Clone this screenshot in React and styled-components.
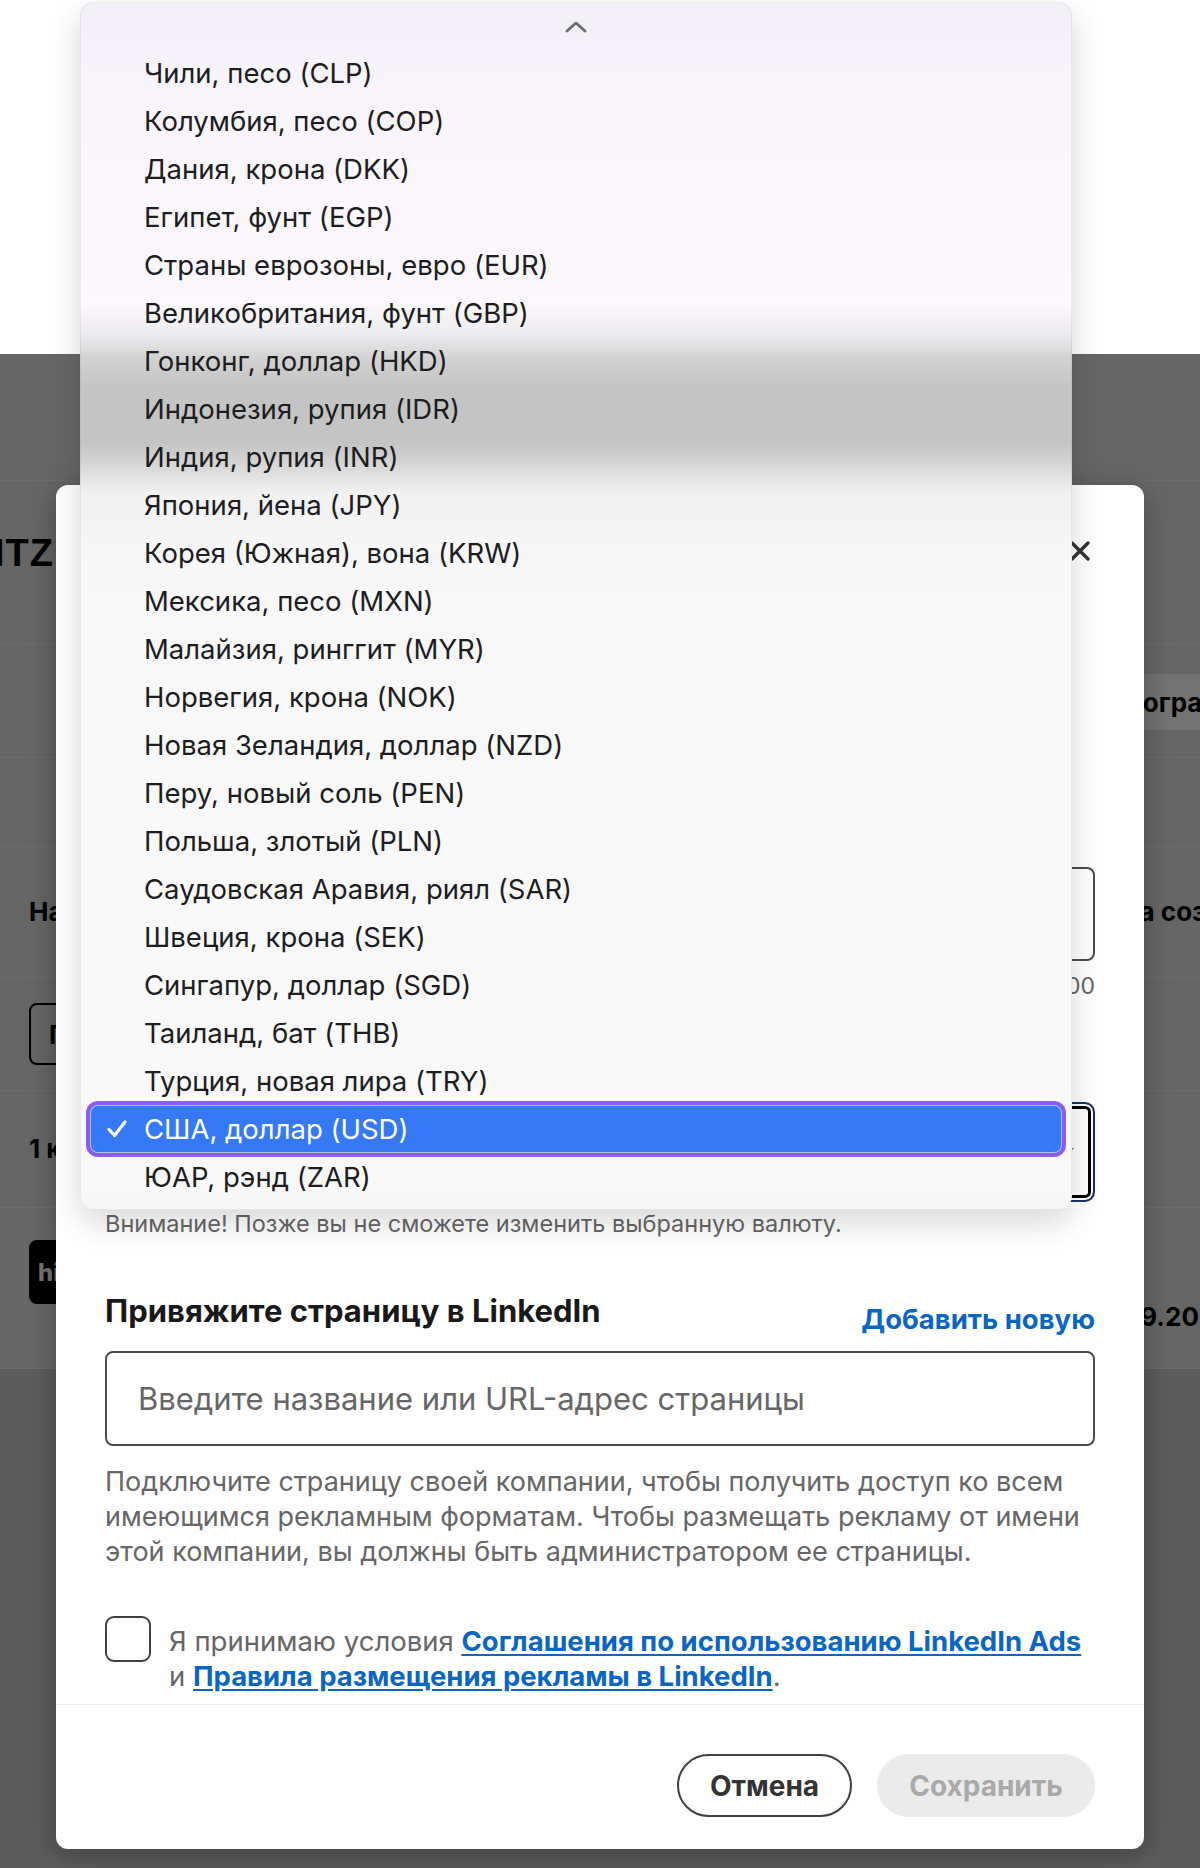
import React from "react";
import styled, { createGlobalStyle } from "styled-components";

const GlobalStyle = createGlobalStyle`
  html, body { margin: 0; padding: 0; background: #ffffff; }
  body { font-family: Inter, "Noto Sans", "Liberation Sans", sans-serif; -webkit-font-smoothing: antialiased; }
  * { box-sizing: border-box; }
`;

const currencies = [
  "Чили, песо (CLP)",
  "Колумбия, песо (COP)",
  "Дания, крона (DKK)",
  "Египет, фунт (EGP)",
  "Страны еврозоны, евро (EUR)",
  "Великобритания, фунт (GBP)",
  "Гонконг, доллар (HKD)",
  "Индонезия, рупия (IDR)",
  "Индия, рупия (INR)",
  "Япония, йена (JPY)",
  "Корея (Южная), вона (KRW)",
  "Мексика, песо (MXN)",
  "Малайзия, ринггит (MYR)",
  "Норвегия, крона (NOK)",
  "Новая Зеландия, доллар (NZD)",
  "Перу, новый соль (PEN)",
  "Польша, злотый (PLN)",
  "Саудовская Аравия, риял (SAR)",
  "Швеция, крона (SEK)",
  "Сингапур, доллар (SGD)",
  "Таиланд, бат (THB)",
  "Турция, новая лира (TRY)",
  "США, доллар (USD)",
  "ЮАР, рэнд (ZAR)",
];
const SELECTED = "США, доллар (USD)";

/* ---------- screen ---------- */
const Screen = styled.div`
  position: relative;
  width: 1200px;
  height: 1868px;
  overflow: hidden;
  background: #ffffff;
`;

const TopBand = styled.div`
  height: 354px;
  background: #ffffff;
`;

/* ---------- page behind the dialog ---------- */
const PageArea = styled.div`
  position: relative;
  height: 1514px;
  background: #cdcdcd;
`;

const PageContent = styled.div`
  background: #e3e3e3;
  padding-top: 126px;
`;

const PageRow = styled.div`
  display: flex;
  align-items: ${(p) => p.$align || "center"};
  height: ${(p) => p.$h}px;
  padding-left: 29px;
  padding-top: ${(p) => p.$pt || 0}px;
  border-top: 1px solid #f0f0f0;
  white-space: nowrap;
`;

const LeftCell = styled.div`
  flex: 0 0 ${(p) => p.$w}px;
  display: flex;
`;

const RightCell = styled.div`
  flex: none;
  display: flex;
`;

const TitleClip = styled.div`
  width: 54px;
  margin-left: -29px;
  overflow: hidden;
  display: flex;
  justify-content: flex-end;
  font-family: "Liberation Sans", Arial, sans-serif;
  font-weight: 700;
  font-size: 38px;
  line-height: 44px;
  color: #000;
  letter-spacing: 1px;
`;

const RowText = styled.div`
  font-weight: 700;
  font-size: 26px;
  line-height: 34px;
  color: #000;
  margin-top: ${(p) => p.$mt || 0}px;
`;

const GhostButton = styled.div`
  display: inline-flex;
  align-items: center;
  height: ${(p) => p.$h}px;
  padding: 0 18px;
  border-radius: 8px;
  font-weight: 700;
  font-size: 26px;
  color: #000;
  background: ${(p) => (p.$filled ? "#ffffff" : "transparent")};
  border: ${(p) => (p.$filled ? "none" : "2px solid #000")};
`;

const LogoTile = styled.div`
  width: 64px;
  height: 64px;
  border-radius: 8px;
  background: #000;
  color: #fff;
  font-weight: 800;
  font-size: 24px;
  display: flex;
  align-items: center;
  padding-left: 9px;
`;

const Dim = styled.div`
  position: absolute;
  inset: 0;
  background: rgba(0, 0, 0, 0.55);
`;

/* ---------- modal ---------- */
const Modal = styled.div`
  position: absolute;
  left: 56px;
  top: 485px;
  width: 1088px;
  background: #ffffff;
  border-radius: 12px;
  box-shadow: 0 6px 28px rgba(0, 0, 0, 0.3);
  display: flex;
  flex-direction: column;
`;

const ModalBody = styled.div`
  padding: 0 49px;
  display: flex;
  flex-direction: column;
`;

const Header = styled.div`
  height: 132px;
  display: flex;
  align-items: center;
  justify-content: space-between;
`;

const Title = styled.h2`
  margin: 0;
  font-size: 30px;
  font-weight: 700;
  color: #191919;
`;

const CloseButton = styled.button`
  width: 30px;
  height: 30px;
  padding: 0;
  border: none;
  background: none;
  display: flex;
  align-items: center;
  justify-content: center;
`;

const FieldLabel = styled.label`
  display: block;
  font-size: 24px;
  line-height: ${(p) => p.$lh}px;
  margin-top: ${(p) => p.$mt}px;
  margin-bottom: ${(p) => p.$mb}px;
  color: #404040;
`;

const TextBox = styled.div`
  height: ${(p) => p.$h}px;
  border: 2px solid #4a4a4a;
  border-radius: 8px;
  display: flex;
  align-items: center;
  padding-left: 31px;
  font-size: 31px;
  color: #666666;
`;

const Counter = styled.div`
  margin-top: 10px;
  text-align: right;
  font-size: 23px;
  line-height: 30px;
  color: #666;
`;

const SelectBox = styled.div`
  position: relative;
  height: 100px;
  border-radius: 10px;
  border: 2px solid #16355f;
  box-shadow: inset 0 0 0 2px #ffffff, inset 0 0 0 5px #000000;
  display: flex;
  align-items: center;
  padding-left: 31px;
  font-size: 30px;
  color: #191919;
`;

const SelectCaret = styled.svg`
  position: absolute;
  right: 18px;
  top: 42px;
`;

const Note = styled.p`
  margin: 7px 0 0;
  font-size: 23.5px;
  line-height: 30px;
  color: #666666;
`;

const SectionRow = styled.div`
  margin-top: 54px;
  display: flex;
  justify-content: space-between;
  align-items: flex-start;
  height: 44px;
`;

const SectionTitle = styled.h3`
  margin: 0;
  font-size: 31px;
  line-height: 36px;
  font-weight: 700;
  color: #191919;
`;

const AddLink = styled.a`
  padding-top: 8px;
  font-size: 27.5px;
  line-height: 36px;
  font-weight: 700;
  color: #0a66c2;
  text-decoration: none;
`;

const PageInput = styled(TextBox)`
  margin-top: 14px;
`;

const Help = styled.p`
  margin: 18px 0 0;
  font-size: 27px;
  line-height: 35px;
  color: #666666;
`;

const TermsRow = styled.div`
  margin-top: 47px;
  margin-bottom: 10px;
  display: flex;
  align-items: flex-start;
  gap: 18px;
`;

const CheckBox = styled.div`
  flex: 0 0 46px;
  width: 46px;
  height: 46px;
  border: 2px solid #404040;
  border-radius: 9px;
`;

const TermsText = styled.p`
  margin: 0;
  padding-top: 8px;
  font-size: 27.5px;
  line-height: 35px;
  color: #666666;
`;

const TermsLink = styled.a`
  color: #0a66c2;
  font-weight: 700;
  text-decoration: underline;
  text-underline-offset: 3px;
`;

const Footer = styled.div`
  border-top: 1px solid #e8e8e8;
  padding: 49px 49px 32px;
  display: flex;
  justify-content: flex-end;
  gap: 25px;
`;

const PillButton = styled.button`
  height: 63px;
  width: ${(p) => p.$w}px;
  border-radius: 32px;
  font-family: inherit;
  font-size: 28px;
  font-weight: 700;
  color: ${(p) => (p.$disabled ? "#a9a9a9" : "#333333")};
  background: ${(p) => (p.$disabled ? "#ebebeb" : "#ffffff")};
  border: ${(p) => (p.$disabled ? "none" : "2px solid #404040")};
`;

/* ---------- native dropdown ---------- */
const Dropdown = styled.div`
  position: absolute;
  left: 80px;
  top: 2px;
  width: 992px;
  padding-bottom: 8px;
  border-radius: 14px;
  border: 1px solid rgba(0, 0, 0, 0.05);
  box-shadow: 0 12px 34px rgba(0, 0, 0, 0.16);
  background: linear-gradient(
    180deg,
    #f3eff7 0px,
    #f7f3fa 60px,
    #faf6fc 200px,
    #fbf8fc 300px,
    #eeecef 330px,
    #d2d2d3 355px,
    #c4c4c4 385px,
    #c4c4c4 440px,
    #d9d9d9 465px,
    #f1f1f1 490px,
    #f7f7f7 560px,
    #f8f8f8 1000px,
    #f7f7f7 100%
  );
`;

const ScrollArrow = styled.div`
  height: 46px;
  display: flex;
  justify-content: center;
  padding-top: 17px;
`;

const Option = styled.div`
  height: 48px;
  margin: 0 9px;
  padding-left: 16px;
  display: flex;
  align-items: center;
  border-radius: 8px;
  font-size: 27.5px;
  color: ${(p) => (p.$selected ? "#ffffff" : "#1d1d1f")};
  background: ${(p) => (p.$selected ? "#3579f6" : "transparent")};
  box-shadow: ${(p) =>
    p.$selected
      ? "0 0 0 4px #8b5cf0, inset 0 0 0 1px rgba(255,255,255,0.55)"
      : "none"};
`;

const CheckSlot = styled.span`
  width: 22px;
  margin-right: 16px;
  display: flex;
  align-items: center;
`;

export default function App() {
  return (
    <>
      <GlobalStyle />
      <Screen>
        <TopBand />
        <PageArea>
          <PageContent>
            <PageRow $h={163} $align="flex-start" $pt={50}>
              <TitleClip>BLITZ</TitleClip>
            </PageRow>
            <PageRow $h={114} $align="flex-start" $pt={30}>
              <LeftCell $w={1060} />
              <RightCell>
                <GhostButton $filled $h={56}>Программа</GhostButton>
              </RightCell>
            </PageRow>
            <PageRow $h={89} />
            <PageRow $h={131}>
              <LeftCell $w={1060}>
                <RowText>Название</RowText>
              </LeftCell>
              <RightCell>
                <RowText>Дата создания</RowText>
              </RightCell>
            </PageRow>
            <PageRow $h={113}>
              <GhostButton $h={62}>Поиск</GhostButton>
            </PageRow>
            <PageRow $h={117}>
              <RowText>1 кампания</RowText>
            </PageRow>
            <PageRow $h={161} $align="flex-start" $pt={32}>
              <LeftCell $w={1057}>
                <LogoTile>hi</LogoTile>
              </LeftCell>
              <RightCell>
                <RowText $mt={60}>01.09.2024</RowText>
              </RightCell>
            </PageRow>
            <PageRow $h={1} />
          </PageContent>
          <Dim />
        </PageArea>

        <Modal>
          <ModalBody>
            <Header>
              <Title>Создайте рекламный аккаунт</Title>
              <CloseButton aria-label="Закрыть">
                <svg width="22" height="22" viewBox="0 0 22 22">
                  <path d="M3 3 L19 19 M19 3 L3 19" stroke="#333" strokeWidth="3.4" strokeLinecap="round" />
                </svg>
              </CloseButton>
            </Header>

            <FieldLabel $mt={200} $mb={14} $lh={36}>Название аккаунта</FieldLabel>
            <TextBox $h={94}>Мой рекламный аккаунт</TextBox>
            <Counter>0/100</Counter>

            <FieldLabel $mt={51} $mb={10} $lh={40}>Валюта</FieldLabel>
            <SelectBox>
              США, доллар (USD)
              <SelectCaret width="12" height="10" viewBox="0 0 12 10">
                <path d="M1 2 L6 8 L11 2 Z" fill="#666" />
              </SelectCaret>
            </SelectBox>
            <Note>Внимание! Позже вы не сможете изменить выбранную валюту.</Note>

            <SectionRow>
              <SectionTitle>Привяжите страницу в LinkedIn</SectionTitle>
              <AddLink href="#">Добавить новую</AddLink>
            </SectionRow>
            <PageInput $h={95}>Введите название или URL-адрес страницы</PageInput>
            <Help>
              Подключите страницу своей компании, чтобы получить доступ ко всем имеющимся
              рекламным форматам. Чтобы размещать рекламу от имени этой компании, вы
              должны быть администратором ее страницы.
            </Help>

            <TermsRow>
              <CheckBox />
              <TermsText>
                Я принимаю условия{" "}
                <TermsLink href="#">Соглашения по использованию LinkedIn Ads</TermsLink>
                <br />и <TermsLink href="#">Правила размещения рекламы в LinkedIn</TermsLink>.
              </TermsText>
            </TermsRow>
          </ModalBody>
          <Footer>
            <PillButton $w={175}>Отмена</PillButton>
            <PillButton $w={218} $disabled>Сохранить</PillButton>
          </Footer>
        </Modal>

        <Dropdown>
          <ScrollArrow>
            <svg width="22" height="13" viewBox="0 0 22 13">
              <path d="M2 11 L11 3 L20 11" stroke="#6e6e73" strokeWidth="3" fill="none" strokeLinecap="round" strokeLinejoin="round" />
            </svg>
          </ScrollArrow>
          {currencies.map((c) => {
            const sel = c === SELECTED;
            return (
              <Option key={c} $selected={sel}>
                <CheckSlot>
                  {sel && (
                    <svg width="22" height="20" viewBox="0 0 22 20">
                      <path d="M3 10.5 L8.5 16.5 L19 3" stroke="#fff" strokeWidth="3.2" fill="none" strokeLinecap="round" strokeLinejoin="round" />
                    </svg>
                  )}
                </CheckSlot>
                {c}
              </Option>
            );
          })}
        </Dropdown>
      </Screen>
    </>
  );
}
